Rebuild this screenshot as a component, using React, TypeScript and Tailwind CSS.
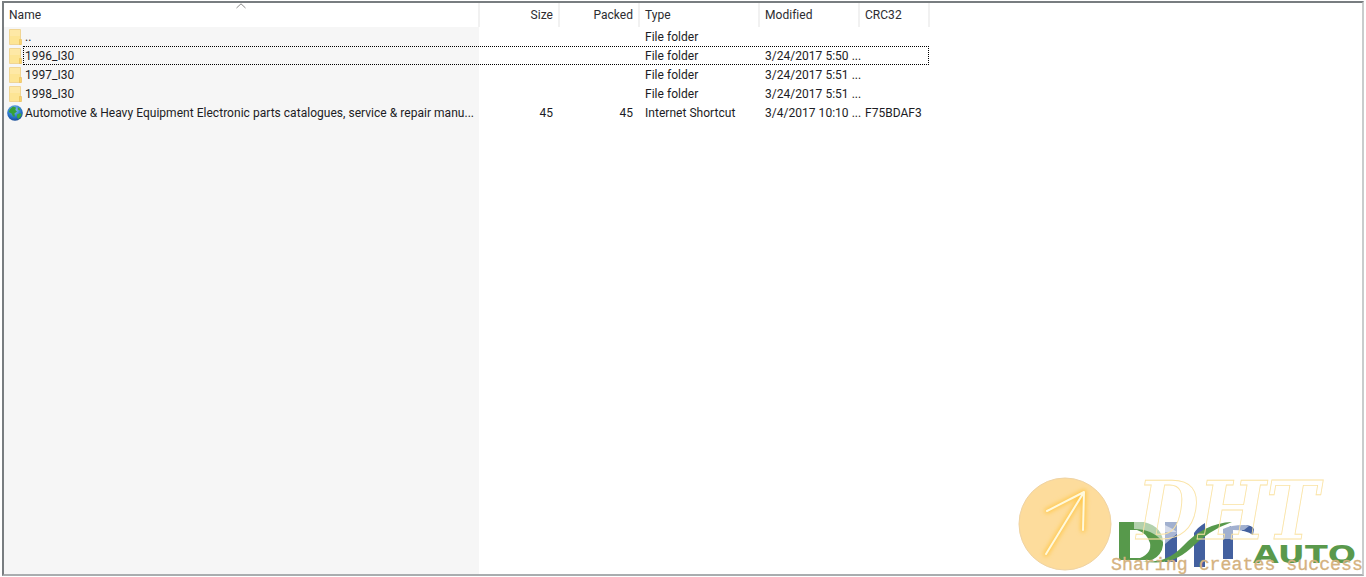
const rows = [
  { icon: 'folder', name: '..', size: '', packed: '', type: 'File folder', modified: '', crc: '' },
  { icon: 'folder', name: '1996_I30', size: '', packed: '', type: 'File folder', modified: '3/24/2017 5:50 ...', crc: '' },
  { icon: 'folder', name: '1997_I30', size: '', packed: '', type: 'File folder', modified: '3/24/2017 5:51 ...', crc: '' },
  { icon: 'folder', name: '1998_I30', size: '', packed: '', type: 'File folder', modified: '3/24/2017 5:51 ...', crc: '' },
  {
    icon: 'globe',
    name: 'Automotive & Heavy Equipment Electronic parts catalogues, service & repair manu...',
    size: '45',
    packed: '45',
    type: 'Internet Shortcut',
    modified: '3/4/2017 10:10 ...',
    crc: 'F75BDAF3',
  },
]

function FolderIcon() {
  return (
    <svg width="13" height="16" viewBox="0 0 13 16" className="shrink-0">
      <path d="M0.5 0.5H11.5V15.5H0.5Z" fill="#fde594" stroke="#f0d594" />
      <path d="M1 1H11V7H1Z" fill="#fee9a6" />
      <path d="M10.5 10.5H12.5V15.5H10.5Z" fill="#f9d36f" stroke="#e9bd55" strokeWidth="0.6" />
    </svg>
  )
}

function GlobeIcon() {
  return (
    <svg width="16" height="16" viewBox="0 0 16 16" className="-ml-[1px] shrink-0">
      <defs>
        <radialGradient id="sea" cx="0.45" cy="0.3" r="0.8">
          <stop offset="0" stopColor="#8cc8f5" />
          <stop offset="0.55" stopColor="#2a78cf" />
          <stop offset="1" stopColor="#103a80" />
        </radialGradient>
      </defs>
      <circle cx="8" cy="8" r="7.8" fill="url(#sea)" />
      <path d="M3 4 6 1.6 9 2.4 8.4 5 10 6.6 7.4 8.6 8 11.4 6 11.6 4.6 8.4 1.6 7Z" fill="#35a038" />
      <path d="M10 9.4 13.4 8 14.6 10 11.6 14 10.2 12.4Z" fill="#3fa83a" />
      <path d="M11 2.2 13.4 4 13 5.6 10.8 4.6Z" fill="#3fa83a" />
    </svg>
  )
}

function Logo() {
  return (
    <svg width="360" height="110" viewBox="0 0 360 110" className="absolute right-0 bottom-0">
      <defs>
        <filter id="glow" x="-30%" y="-30%" width="160%" height="160%">
          <feGaussianBlur stdDeviation="2.2" />
        </filter>
      </defs>
      <circle cx="59" cy="57" r="46" fill="#fddc9c" stroke="#efd3a3" />
      <g fill="none" strokeLinecap="round" strokeLinejoin="round">
        <path d="M40 87 78 25M41 44 78 25 77 63" stroke="#ffc94f" strokeWidth="5" filter="url(#glow)" />
        <path d="M40 87 78 25M41 44 78 25 77 63" stroke="#fff9dc" strokeWidth="2" />
      </g>
      {/* stems */}
      <path d="M159 55H171V95H159Z" fill="#43609f" />
      <path d="M188 66Q192 60 199 56V100H188Z" fill="#43609f" />
      <path d="M217 62Q225 58 238 58 246 58 248 62L247 68Q240 63 227 63V92H217Z" fill="#43609f" />
      {/* D */}
      <path d="M113 55H138Q158 60 157 78 156 88 146 93H113ZM124 63V91H134Q146 86 144 76 141 66 131 63Z" fill="#57994b" fillRule="evenodd" />
      <path d="M136 94Q160 97 176 80 198 56 226 55 203 63 184 82 164 100 136 94Z" fill="#57994b" />
      {/* pale sweep over the top */}
      <path d="M128 55H146Q160 56 172 66L159 77 156 74Q146 62 128 62Z" fill="#ffffff" fillOpacity="0.55" />
      <path d="M159 54H171V65H159ZM217 60H236V72H217ZM225 57Q236 56 243 59L238 63H225Z" fill="#ffffff" fillOpacity="0.5" />
      <text x="131" y="72" fontFamily="'DejaVu Serif', serif" fontSize="80" fontWeight="700" fontStyle="italic" fill="none" stroke="#fae3a4" strokeWidth="0.9" textLength="182" lengthAdjust="spacingAndGlyphs">DHT</text>
      <text x="247" y="96" fontFamily="'DejaVu Sans', sans-serif" fontSize="25" fontWeight="700" fill="#5a994c" textLength="103" lengthAdjust="spacingAndGlyphs">AUTO</text>
      <text x="105" y="103" fontFamily="'Liberation Mono', monospace" fontSize="18" fill="#d5b280" stroke="#d5b280" strokeWidth="0.3" textLength="252" lengthAdjust="spacingAndGlyphs">Sharing creates success</text>
    </svg>
  )
}

function Head({ label, className }: { label: string; className: string }) {
  return (
    <div className={`flex h-[24px] items-center border-r-2 border-[#f1f1f1] ${className}`}>{label}</div>
  )
}

export default function App() {
  return (
    <div className="relative h-[577px] w-full overflow-hidden bg-white pt-[1px] pr-[2px] pl-[2px] text-[12px] tracking-[0.03px] text-[#1c1c24]" style={{ fontFamily: 'Roboto, sans-serif' }}>
      <div className="flex h-[575px] flex-col border-2 border-t-[#787d80] border-r-[#c9cccd] border-b-[#a9adaf] border-l-[#787d80]">
        <div className="relative flex h-[24px] text-[#2c2c30]">
          <Head label="Name" className="w-[476px] pl-[5px]" />
          <Head label="Size" className="w-[80px] justify-end pr-[5px]" />
          <Head label="Packed" className="w-[80px] justify-end pr-[5px]" />
          <Head label="Type" className="w-[120px] pl-[5px]" />
          <Head label="Modified" className="w-[100px] pl-[5px]" />
          <Head label="CRC32" className="w-[70px] pl-[5px]" />
          <svg width="10" height="6" viewBox="0 0 10 6" className="absolute top-0 left-[232px]">
            <path d="M0.5 5 5 0.8 9.5 5" fill="none" stroke="#8a8a8a" />
          </svg>
        </div>
        <div className="relative flex-1">
          <div className="absolute inset-y-0 left-0 w-[475px] bg-[#f6f6f6]" />
          <div className="relative flex flex-col">
            {rows.map((row) => (
              <div key={row.name} className="flex h-[19px] items-center">
                <div className="flex w-[475px] items-center">
                  <div className="flex w-[19px] shrink-0 justify-center pl-[4px]">
                    {row.icon === 'folder' ? <FolderIcon /> : <GlobeIcon />}
                  </div>
                  <span className="ml-[2px] whitespace-nowrap">{row.name}</span>
                </div>
                <div className="w-[80px] pr-[6px] text-right">{row.size}</div>
                <div className="w-[80px] pr-[6px] text-right">{row.packed}</div>
                <div className="w-[120px] pl-[6px]">{row.type}</div>
                <div className="w-[100px] pl-[6px] whitespace-nowrap">{row.modified}</div>
                <div className="w-[70px] pl-[6px]">{row.crc}</div>
              </div>
            ))}
          </div>
          <div className="absolute top-[19px] left-[19px] h-[19px] w-[906px] border border-dotted border-black" />
        </div>
      </div>
      <Logo />
    </div>
  )
}
